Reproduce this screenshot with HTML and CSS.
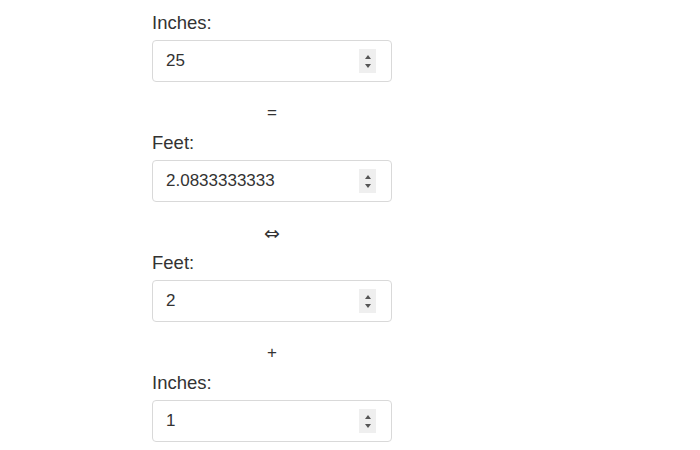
FILE: index.html
```html
<!DOCTYPE html>
<html>
<head>
<meta charset="utf-8">
<link rel="stylesheet" href="styles.css">
</head>
<body>
<div class="converter">
  <div class="group">
    <label class="label">Inches:</label>
    <div class="field"><input class="value" type="text" value="25"><span class="spin"><i class="up"></i><i class="down"></i></span></div>
  </div>
  <div class="op">=</div>
  <div class="group">
    <label class="label">Feet:</label>
    <div class="field"><input class="value" type="text" value="2.0833333333"><span class="spin"><i class="up"></i><i class="down"></i></span></div>
  </div>
  <div class="op op-arrow">⇔</div>
  <div class="group">
    <label class="label">Feet:</label>
    <div class="field"><input class="value" type="text" value="2"><span class="spin"><i class="up"></i><i class="down"></i></span></div>
  </div>
  <div class="op">+</div>
  <div class="group">
    <label class="label">Inches:</label>
    <div class="field"><input class="value" type="text" value="1"><span class="spin"><i class="up"></i><i class="down"></i></span></div>
  </div>
</div>
</body>
</html>
```

FILE: styles.css
```css
html, body {
  margin: 0;
  padding: 0;
  background: #fff;
}
body {
  font-family: "Liberation Sans", Arial, sans-serif;
  color: #333;
}
.converter {
  width: 240px;
  margin-left: 152px;
  padding-top: 13px;
}
.label {
  display: block;
  font-size: 18.5px;
  line-height: 20px;
  margin-bottom: 7px;
  color: #333;
}
.field {
  box-sizing: border-box;
  height: 42px;
  border: 1px solid #d9d9d9;
  border-radius: 4px;
  display: flex;
  align-items: center;
  padding: 0 15px 0 13px;
  background: #fff;
}
.value {
  flex: 1;
  min-width: 0;
  border: none;
  outline: none;
  padding: 0;
  margin: 0;
  background: transparent;
  font-family: "Liberation Sans", Arial, sans-serif;
  font-size: 17px;
  color: #333;
}
.spin {
  width: 17px;
  height: 24px;
  background: #efefef;
  display: flex;
  flex-direction: column;
  align-items: center;
  justify-content: center;
  gap: 5px;
}
.up, .down {
  display: block;
  width: 0;
  height: 0;
  border-left: 3.5px solid transparent;
  border-right: 3.5px solid transparent;
}
.up {
  border-bottom: 4px solid #555;
}
.down {
  border-top: 4px solid #555;
}
.op {
  text-align: center;
  font-size: 17px;
  line-height: 20px;
  height: 20px;
  margin: 21px 0 10px;
  color: #333;
}
.op-arrow {
  font-family: "DejaVu Sans", sans-serif;
  font-size: 19px;
}
```
